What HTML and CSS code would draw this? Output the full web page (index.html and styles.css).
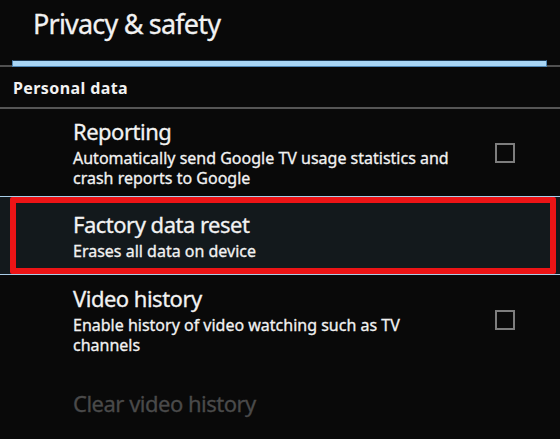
FILE: index.html
```html
<!DOCTYPE html>
<html>
<head>
<meta charset="utf-8">
<link rel="stylesheet" href="styles.css">
</head>
<body>
<div class="screen">
  <header class="header">
    <h1 class="title">Privacy &amp; safety</h1>
  </header>
  <div class="tabbar">
    <div class="tab-edge left"></div>
    <div class="tab-active"></div>
    <div class="tab-edge right"></div>
  </div>
  <div class="section">Personal data</div>
  <div class="pref first">
    <div class="pref-text">
      <div class="pref-title">Reporting</div>
      <div class="pref-summary">Automatically send Google TV usage statistics and crash reports to Google</div>
    </div>
    <div class="checkbox"></div>
  </div>
  <div class="pref selected">
    <div class="pref-text">
      <div class="pref-title">Factory data reset</div>
      <div class="pref-summary">Erases all data on device</div>
    </div>
    <div class="red-frame"></div>
  </div>
  <div class="pref third">
    <div class="pref-text">
      <div class="pref-title">Video history</div>
      <div class="pref-summary">Enable history of video watching such as TV channels</div>
    </div>
    <div class="checkbox"></div>
  </div>
  <div class="pref disabled">
    <div class="pref-text">
      <div class="pref-title">Clear video history</div>
    </div>
  </div>
</div>
</body>
</html>
```

FILE: styles.css
```css
html, body {
  margin: 0;
  padding: 0;
  background: #090909;
}
body {
  font-family: "Noto Sans", "Open Sans", sans-serif;
  color: #f2f2f2;
  width: 560px;
  height: 439px;
  overflow: hidden;
}
.screen {
  display: flex;
  flex-direction: column;
}
.header {
  height: 60px;
  padding: 7px 0 0 33px;
  box-sizing: border-box;
}
.title {
  margin: 0;
  font-size: 27px;
  font-weight: normal;
  line-height: 34px;
  letter-spacing: -0.8px;
  -webkit-text-stroke: 0.3px #f2f2f2;
}
.tabbar {
  display: flex;
  align-items: flex-end;
  height: 7px;
}
.tab-edge {
  height: 2px;
  background: #505050;
}
.tab-edge.left { width: 12px; }
.tab-edge.right { width: 13px; }
.tab-active {
  flex: 1;
  height: 7px;
  box-sizing: border-box;
  background: #a9d6f5;
  border: 1px solid #4f86b4;
  border-top-color: #1d3a55;
}
.section {
  font-weight: bold;
  font-size: 16px;
  line-height: 20px;
  padding: 11px 0 9px 13px;
  border-bottom: 2px solid #555;
  letter-spacing: 0.4px;
}
.pref {
  display: flex;
  align-items: center;
  padding-left: 73px;
  padding-right: 45px;
}
.pref-text {
  flex: 1;
}
.pref-title {
  font-size: 22px;
  line-height: 26px;
  letter-spacing: -0.5px;
  -webkit-text-stroke: 0.3px currentColor;
}
.pref-summary {
  font-size: 16px;
  line-height: 20px;
  margin-top: 4px;
  width: 385px;
  letter-spacing: 0;
  -webkit-text-stroke: 0.3px currentColor;
}
.checkbox {
  width: 20px;
  height: 20px;
  box-sizing: border-box;
  border: 2px solid #7d7d7d;
  flex: none;
}
.pref.first {
  padding-top: 9px;
  padding-bottom: 8px;
}
.pref.selected {
  position: relative;
  padding-top: 14px;
  padding-bottom: 13px;
  background: #13191c;
  border-top: 1px solid #a8cde8;
  border-bottom: 1px solid #a8cde8;
}
.red-frame {
  position: absolute;
  left: 10px;
  right: 4px;
  top: 0;
  bottom: 0;
  border: 6px solid #ec1416;
  border-radius: 2px;
}
.pref.third {
  padding-top: 10px;
  padding-bottom: 9px;
}
.pref.disabled {
  padding-top: 26px;
  color: #4a4a4a;
}
```
